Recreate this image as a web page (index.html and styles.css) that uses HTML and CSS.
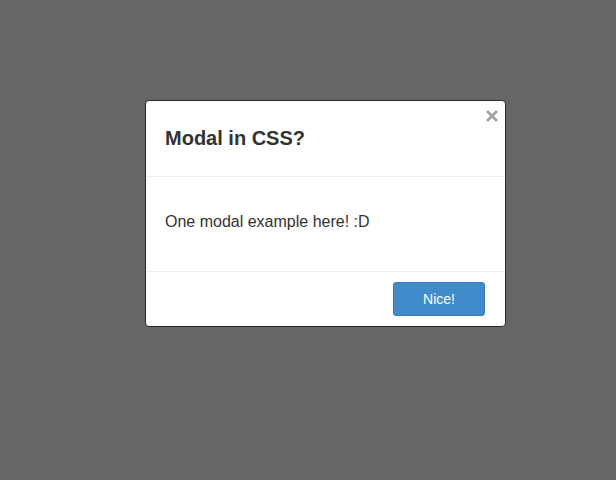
FILE: index.html
```html
<!DOCTYPE html>
<html>
<head>
<meta charset="utf-8">
<link rel="stylesheet" href="styles.css">
</head>
<body>
<div class="overlay">
  <div class="modal">
    <a class="close" href="#" aria-label="Close">
      <svg width="14" height="14" viewBox="0 0 14 14"><path d="M2 2 L12 12 M12 2 L2 12" stroke="#a3a3a3" stroke-width="2.8" stroke-linecap="butt"/></svg>
    </a>
    <div class="modal-header">
      <h2 class="modal-title">Modal in CSS?</h2>
    </div>
    <div class="modal-body">
      <p class="modal-text">One modal example here! :D</p>
    </div>
    <div class="modal-footer">
      <button class="btn">Nice!</button>
    </div>
  </div>
</div>
</body>
</html>
```
FILE: styles.css
```css
html, body {
  margin: 0;
  padding: 0;
  height: 100%;
}
body {
  background: #666666;
  font-family: "Liberation Sans", Arial, sans-serif;
  color: #333333;
}
.overlay {
  padding: 100px 0 0 145px;
}
.modal {
  position: relative;
  width: 361px;
  box-sizing: border-box;
  background: #ffffff;
  border: 1px solid #2a2a2a;
  border-radius: 4px;
}
.close {
  position: absolute;
  top: 8px;
  right: 6px;
  display: block;
  width: 14px;
  height: 14px;
  line-height: 0;
}
.modal-header {
  padding: 20px 20px 20px 19px;
  border-bottom: 1px solid #eeeeee;
}
.modal-title {
  margin: 0;
  font-size: 20px;
  line-height: 35px;
  font-weight: bold;
  color: #333333;
}
.modal-body {
  padding: 34px 20px 38px 19px;
  border-bottom: 1px solid #eeeeee;
}
.modal-text {
  margin: 0;
  font-size: 16px;
  line-height: 22px;
  color: #333333;
}
.modal-footer {
  display: flex;
  justify-content: flex-end;
  padding: 10px 20px 10px;
}
.btn {
  width: 92px;
  height: 34px;
  background: #428bca;
  border: 1px solid #357ebd;
  border-radius: 3px;
  color: #ffffff;
  font-family: "Liberation Sans", Arial, sans-serif;
  font-size: 14px;
  padding: 0;
}
```
